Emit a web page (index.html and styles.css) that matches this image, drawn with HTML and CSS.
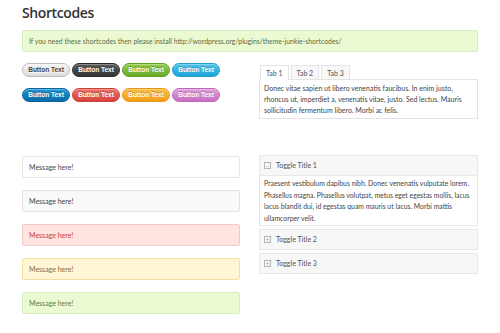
FILE: index.html
```html
<!DOCTYPE html>
<html lang="en">
<head>
  <meta charset="UTF-8">
  <title>Shortcodes</title>
  <link rel="stylesheet" href="styles.css">
</head>
<body>
  <div class="container">
    <h1>Shortcodes</h1>
    <div class="notice">If you need these shortcodes then please install http://wordpress.org/plugins/theme-junkie-shortcodes/</div>

    <div class="row">
      <div class="buttons">
        <a class="btn btn-light" href="#">Button Text</a>
        <a class="btn btn-dark" href="#">Button Text</a>
        <a class="btn btn-green" href="#">Button Text</a>
        <a class="btn btn-sky" href="#">Button Text</a>
        <a class="btn btn-blue" href="#">Button Text</a>
        <a class="btn btn-red" href="#">Button Text</a>
        <a class="btn btn-orange" href="#">Button Text</a>
        <a class="btn btn-purple" href="#">Button Text</a>
      </div>
      <div class="tabs">
        <ul class="tab-nav">
          <li class="active">Tab 1</li>
          <li>Tab 2</li>
          <li>Tab 3</li>
        </ul>
        <div class="tab-panel">Donec vitae sapien ut libero venenatis faucibus. In enim justo, rhoncus ut, imperdiet a, venenatis vitae, justo. Sed lectus. Mauris sollicitudin fermentum libero. Morbi ac felis.</div>
      </div>
    </div>

    <div class="row row-bottom">
      <div class="messages">
        <div class="msg">Message here!</div>
        <div class="msg msg-gray">Message here!</div>
        <div class="msg msg-red">Message here!</div>
        <div class="msg msg-yellow">Message here!</div>
        <div class="msg msg-green">Message here!</div>
      </div>
      <div class="toggles">
        <div class="toggle open">
          <div class="toggle-title"><span class="toggle-icon">&minus;</span>Toggle Title 1</div>
          <div class="toggle-content">Praesent vestibulum dapibus nibh. Donec venenatis vulputate lorem. Phasellus magna. Phasellus volutpat, metus eget egestas mollis, lacus lacus blandit dui, id egestas quam mauris ut lacus. Morbi mattis ullamcorper velit.</div>
        </div>
        <div class="toggle">
          <div class="toggle-title"><span class="toggle-icon">+</span>Toggle Title 2</div>
        </div>
        <div class="toggle">
          <div class="toggle-title"><span class="toggle-icon">+</span>Toggle Title 3</div>
        </div>
      </div>
    </div>
  </div>
</body>
</html>
```

FILE: styles.css
```css
body {
  margin: 0;
  padding: 0;
  background: #fff;
  font-family: Lato, "Open Sans", sans-serif;
  font-size: 7px;
  line-height: 11.5px;
  color: #444;
}
.container {
  padding: 0 22px;
}
h1 {
  margin: 0;
  padding-top: 3px;
  font-family: "Open Sans", sans-serif;
  font-weight: 600;
  font-size: 14px;
  letter-spacing: -0.4px;
  line-height: 20px;
  color: #333;
}
.notice {
  margin-top: 7px;
  height: 22px;
  line-height: 20px;
  padding: 0 6px;
  background: #ebfad3;
  border: 1px solid #d8edbe;
  border-radius: 2px;
  color: #5c6b44;
  font-size: 6.9px;
  box-sizing: border-box;
}
.row {
  display: grid;
  grid-template-columns: 218px 219px;
  column-gap: 19px;
  margin-top: 11px;
}
.row-bottom {
  margin-top: 36px;
}

/* buttons */
.buttons {
  display: grid;
  grid-template-columns: repeat(4, 48px);
  column-gap: 2px;
  row-gap: 11px;
  align-content: start;
}
.btn {
  display: block;
  height: 14px;
  line-height: 12px;
  border: 1px solid;
  border-radius: 7px;
  box-sizing: border-box;
  text-align: center;
  text-decoration: none;
  font-family: "Liberation Sans", Arial, sans-serif;
  font-weight: bold;
  font-size: 6.5px;
  color: #fff;
  text-shadow: 0 -1px 0 rgba(0, 0, 0, 0.25);
  box-shadow: inset 0 1px 0 rgba(255, 255, 255, 0.3);
}
.btn-light {
  background: linear-gradient(#f6f6f6, #dcdcdc);
  border-color: #bdbdbd;
  color: #444;
  text-shadow: 0 1px 0 #fff;
}
.btn-dark {
  background: linear-gradient(#5a5a5a, #353535);
  border-color: #2a2a2a;
}
.btn-green {
  background: linear-gradient(#93cc47, #6caa2c);
  border-color: #63a026;
}
.btn-sky {
  background: linear-gradient(#4cc6ee, #22a4d8);
  border-color: #1f9ccd;
}
.btn-blue {
  background: linear-gradient(#1e96d3, #0a6aa8);
  border-color: #0a62a0;
}
.btn-red {
  background: linear-gradient(#f07068, #d6443c);
  border-color: #cc3f37;
}
.btn-orange {
  background: linear-gradient(#fdbf45, #f59d17);
  border-color: #eb9612;
}
.btn-purple {
  background: linear-gradient(#e19ddc, #c66fc1);
  border-color: #bc67b7;
}

/* tabs */
.tabs {
  padding-top: 2px;
}
.tab-nav {
  display: flex;
  gap: 2px;
  margin: 0;
  padding: 0 0 0 1px;
  list-style: none;
}
.tab-nav li {
  height: 14px;
  line-height: 14px;
  padding: 0 5px;
  white-space: nowrap;
  box-sizing: border-box;
  border: 1px solid #e4e4e4;
  border-bottom: none;
  background: #f8f8f8;
  color: #555;
}
.tab-nav li.active {
  background: #fff;
  height: 15px;
  margin-bottom: -1px;
  position: relative;
}
.tab-panel {
  border: 1px solid #e4e4e4;
  padding: 3px 4px 2px;
  line-height: 11px;
  color: #444;
}

/* messages */
.messages {
  display: flex;
  flex-direction: column;
  gap: 12px;
  padding-top: 1px;
}
.msg {
  height: 22px;
  line-height: 20px;
  padding: 0 6px;
  box-sizing: border-box;
  border: 1px solid #e6e6e6;
  border-radius: 2px;
  background: #fff;
  color: #444;
}
.msg-gray {
  background: #f9f9f9;
  border-color: #e2e2e2;
}
.msg-red {
  background: #ffe4e1;
  border-color: #f4c9c4;
  color: #c9423c;
}
.msg-yellow {
  background: #fff6d6;
  border-color: #f4e0a0;
  color: #8c6a3a;
}
.msg-green {
  background: #ebfad3;
  border-color: #d6edbc;
  color: #5e7a3e;
}

/* toggles */
.toggles {
  display: flex;
  flex-direction: column;
  gap: 3px;
}
.toggle {
  border: 1px solid #e8e8e8;
}
.toggle-title {
  display: flex;
  align-items: center;
  height: 19px;
  padding: 0 4px;
  background: #f7f7f7;
  color: #555;
}
.toggle.open .toggle-title {
  border-bottom: 1px solid #e8e8e8;
}
.toggle-icon {
  display: inline-block;
  width: 5px;
  height: 5px;
  margin-right: 5px;
  border: 1px solid #b5b5b5;
  font-size: 6px;
  line-height: 5px;
  text-align: center;
  color: #999;
}
.toggle-content {
  padding: 2px 6px 1px 4px;
  font-size: 6.85px;
  background: #fff;
  color: #444;
}
```
